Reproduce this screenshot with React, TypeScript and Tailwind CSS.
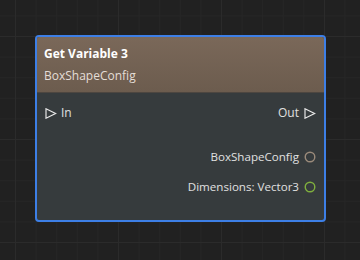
import React from "react";

type Pin = { label: string; color: string };

const outputs: Pin[] = [
  { label: "BoxShapeConfig", color: "#9a8a7a" },
  { label: "Dimensions: Vector3", color: "#7fae3e" },
];

function Arrow() {
  return (
    <svg width="12" height="11" viewBox="0 0 12 11" className="shrink-0">
      <path d="M1 0.8 L10.6 5.5 L1 10.2 Z" fill="none" stroke="#e6e6e6" strokeWidth="1.2" strokeLinejoin="miter" />
    </svg>
  );
}

function Dot({ color }: { color: string }) {
  return (
    <svg width="12" height="12" viewBox="0 0 12 12" className="shrink-0">
      <circle cx="6" cy="6" r="4.8" fill="none" stroke={color} strokeWidth="1.4" />
    </svg>
  );
}

export default function App() {
  return (
    <div
      className="relative w-[360px] h-[260px] overflow-hidden bg-[#212121] bg-[image:linear-gradient(to_right,#2b2b2b_1px,transparent_1px),linear-gradient(to_bottom,#2b2b2b_1px,transparent_1px),linear-gradient(to_right,#262626_1px,transparent_1px),linear-gradient(to_bottom,#262626_1px,transparent_1px)] bg-[size:103px_103px,103px_103px,20.6px_20.6px,20.6px_20.6px] bg-[position:15px_36px]"
      style={{ fontFamily: '"Open Sans", "Noto Sans", sans-serif' }}
    >
      {/* node on the canvas */}
      <div className="absolute left-[35px] top-[35px] w-[291px] h-[187px] rounded-[4px] border-2 border-[#3d7fe6] overflow-hidden flex flex-col bg-[#363b3d]">
        <div className="h-[56px] px-[7px] pt-[9px] bg-gradient-to-b from-[#7a6859] to-[#6c5c4e] border-b border-[#4d4640]">
          <div className="text-[12px] leading-[16px] font-bold text-white">Get Variable 3</div>
          <div className="text-[12px] leading-[16px] mt-[6px] text-[#e4ddd6]">BoxShapeConfig</div>
        </div>

        <div className="flex-1 px-[8px] pt-[12px] text-[12px] leading-[16px] text-[#e0e0e0]">
          <div className="flex items-center justify-between">
            <div className="flex items-center gap-[4px]">
              <Arrow />
              <span>In</span>
            </div>
            <div className="flex items-center gap-[5px]">
              <span>Out</span>
              <Arrow />
            </div>
          </div>

          <div className="flex flex-col items-end gap-[14px] mt-[28px] text-[11.6px]">
            {outputs.map((p) => (
              <div key={p.label} className="flex items-center gap-[5px]">
                <span>{p.label}</span>
                <Dot color={p.color} />
              </div>
            ))}
          </div>
        </div>
      </div>
    </div>
  );
}
